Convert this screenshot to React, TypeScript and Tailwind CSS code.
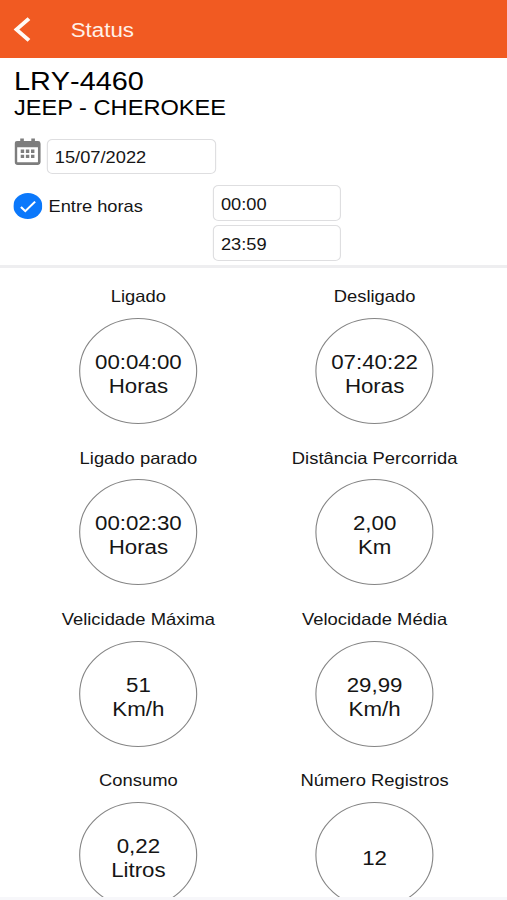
import { useState } from 'react';

interface Metric {
  label: string;
  value: string;
  unit?: string;
}

const metrics: Metric[] = [
  { label: 'Ligado', value: '00:04:00', unit: 'Horas' },
  { label: 'Desligado', value: '07:40:22', unit: 'Horas' },
  { label: 'Ligado parado', value: '00:02:30', unit: 'Horas' },
  { label: 'Distância Percorrida', value: '2,00', unit: 'Km' },
  { label: 'Velicidade Máxima', value: '51', unit: 'Km/h' },
  { label: 'Velocidade Média', value: '29,99', unit: 'Km/h' },
  { label: 'Consumo', value: '0,22', unit: 'Litros' },
  { label: 'Número Registros', value: '12' },
];

function CalendarIcon() {
  return (
    <svg viewBox="0 0 26 27" preserveAspectRatio="none" className="mt-[-1px] h-[27px] w-[23.5px] shrink-0" fill="none">
      <rect x="1.4" y="4.2" width="23.2" height="21.4" rx="1.8" stroke="#7d7d7d" strokeWidth="2.6" />
      <path d="M1 3.5h24v5.7H1z" fill="#7d7d7d" />
      <path d="M7.5 0.5v5M18.5 0.5v5" stroke="#7d7d7d" strokeWidth="3.6" />
      <path
        d="M6.2 13.2h3.4M11.3 13.2h3.4M16.4 13.2h3.4M6.2 18.4h3.4M11.3 18.4h3.4M16.4 18.4h3.4"
        stroke="#7d7d7d"
        strokeWidth="3.4"
      />
    </svg>
  );
}

function MetricCircle({ label, value, unit }: Metric) {
  return (
    <div className="flex h-[161.3px] flex-col items-center">
      <span className="text-[16.5px] leading-[20px] whitespace-nowrap">{label}</span>
      <div className="mt-[11.7px] flex h-[106px] w-[106px] shrink-0 flex-col items-center justify-center rounded-full border border-[#858585] pt-1.5 text-[20px] leading-[24px]">
        <span>{value}</span>
        {unit && <span>{unit}</span>}
      </div>
    </div>
  );
}

export default function App() {
  const [date, setDate] = useState('15/07/2022');
  const [startTime, setStartTime] = useState('00:00');
  const [endTime, setEndTime] = useState('23:59');
  const [between, setBetween] = useState(true);

  return (
    <div className="h-[900px] w-[507px] overflow-hidden bg-white">
      <div className="flex h-[900px] w-[455px] origin-top-left scale-x-[1.1143] flex-col font-['Liberation_Sans',Arial,sans-serif] text-[#151515]">
        {/* Header */}
        <header className="flex h-[58px] shrink-0 items-center bg-[#f15a22] pl-[11.5px] text-[#fff1e8]">
          <button className="w-[52px]" aria-label="Voltar">
            <svg width="16" height="25" viewBox="0 0 16 24" preserveAspectRatio="none" fill="none">
              <path d="M14 1.5 2.8 12 14 22.5" stroke="#fffaf5" strokeWidth="3.6" />
            </svg>
          </button>
          <h1 className="pt-[2px] text-[20px] leading-[24px]">Status</h1>
        </header>

        {/* Filters */}
        <section className="h-[209.5px] shrink-0 border-b-[3.5px] border-[#eeeef0] pt-[9px] pl-[12px]">
          <h2 className="pl-[0.5px] text-[25.9px] leading-[29px] text-black [font-kerning:none]">LRY-4460</h2>
          <p className="pl-[0.5px] text-[21.2px] leading-[24px] text-black">JEEP - CHEROKEE</p>

          <div className="mt-[19px] flex h-[35px] gap-[5.2px] pl-px">
            <CalendarIcon />
            <input
              value={date}
              onChange={(e) => setDate(e.target.value)}
              className="h-[35px] w-[152px] rounded-[5px] border border-[#dedee0] px-[6.5px] pt-[2px] text-[16.4px] outline-none"
            />
          </div>

          <div className="mt-[11px] flex">
            <button
              onClick={() => setBetween(!between)}
              className="mt-[8px] flex h-[26px] w-[178.8px] items-center gap-[5.5px]"
            >
              <svg width="26" height="26" viewBox="0 0 26 26" fill="none" className="shrink-0">
                <circle cx="13" cy="13" r="13" fill={between ? '#0b78fb' : '#dedee0'} />
                {between && <path d="m6.8 14 3.9 4.2 8.8-9.6" stroke="white" strokeWidth="1.9" />}
              </svg>
              <span className="text-[16.4px] leading-[20px]">Entre horas</span>
            </button>
            <div className="flex flex-col gap-[4px]">
              <input
                value={startTime}
                onChange={(e) => setStartTime(e.target.value)}
                className="h-[36px] w-[115px] rounded-[5px] border border-[#dedee0] px-[6.5px] pt-[2px] text-[16.4px] outline-none"
              />
              <input
                value={endTime}
                onChange={(e) => setEndTime(e.target.value)}
                className="h-[36px] w-[115px] rounded-[5px] border border-[#dedee0] px-[6.5px] pt-[2px] text-[16.4px] outline-none"
              />
            </div>
          </div>
        </section>

        {/* Metrics */}
        <main className="grid h-[629.5px] shrink-0 grid-cols-[212px_212px] content-start overflow-hidden pt-[18.8px] pl-[18.2px]">
          {metrics.map((metric) => (
            <MetricCircle key={metric.label} {...metric} />
          ))}
        </main>

        <footer className="h-[3px] shrink-0 bg-[#f7f7fa]" />
      </div>
    </div>
  );
}
